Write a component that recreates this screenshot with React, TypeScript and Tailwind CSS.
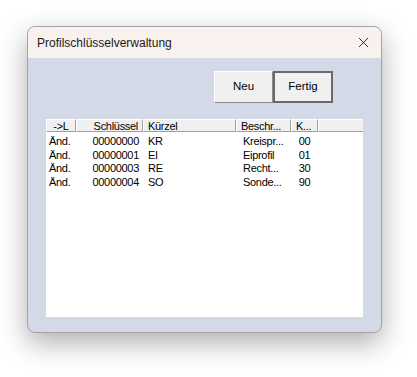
import { X } from 'lucide-react'

const rows = [
  { a: 'Änd.', key: '00000000', short: 'KR', desc: 'Kreispr...', k: '00' },
  { a: 'Änd.', key: '00000001', short: 'EI', desc: 'Eiprofil', k: '01' },
  { a: 'Änd.', key: '00000003', short: 'RE', desc: 'Recht...', k: '30' },
  { a: 'Änd.', key: '00000004', short: 'SO', desc: 'Sonde...', k: '90' },
]

const cols = 'grid grid-cols-[30px_67px_93px_55px_27px_1fr]'
const headCell =
  'h-[13px] leading-[12px] px-[4px] bg-[#f0f0f0] border-t border-l border-t-white border-l-white border-r border-b border-r-[#a0a0a0] border-b-[#a0a0a0] truncate'

export default function App() {
  return (
    <div className="w-[417px] h-[377px] bg-white pt-[26px] pl-[27px]" style={{ fontFamily: '"Liberation Sans", Arial, sans-serif' }}>
      <div className="w-[355px] h-[307px] rounded-[8px] border border-[#a3a3a8] bg-[#d4d9e8] shadow-[0_10px_28px_rgba(0,0,0,0.32)] overflow-hidden flex flex-col">
        {/* title bar */}
        <div className="h-[31px] shrink-0 bg-[#f9f1ed] flex items-center justify-between pl-[9px] pr-[9px]">
          <span className="text-[12px] text-[#1a1a1a]">Profilschlüsselverwaltung</span>
          <X size={17} strokeWidth={1.1} className="text-black" />
        </div>

        <div className="flex-1 flex flex-col px-[18px] pb-[15px] pt-[13px]">
          <div className="flex justify-end pr-[30px]">
            <button className="w-[59px] h-[32px] bg-[#f0f0f0] text-[11.5px] border border-t-white border-l-white border-r-[#8a8a8a] border-b-[#8a8a8a]">
              Neu
            </button>
            <button className="w-[60px] h-[32px] bg-[#f0f0f0] text-[11.5px] border-2 border-[#6a6a6a]">
              Fertig
            </button>
          </div>

          <div className="mt-[16px] flex-1 bg-white text-[11px] text-black tracking-[-0.3px]">
            <div className={cols}>
              <div className={headCell + ' text-center'}>-&gt;L</div>
              <div className={headCell + ' text-right'}>Schlüssel</div>
              <div className={headCell}>Kürzel</div>
              <div className={headCell}>Beschr...</div>
              <div className={headCell}>K...</div>
              <div className="h-[13px] bg-[#f0f0f0] border-t border-l border-t-white border-l-white border-b border-b-[#a0a0a0]" />
            </div>
            <div className="pt-[3px]">
              {rows.map((r) => (
                <div key={r.key} className={cols + ' h-[13.5px] leading-[13px]'}>
                  <div className="pl-[3px]">{r.a}</div>
                  <div className="text-right pr-[4px]">{r.key}</div>
                  <div className="pl-[5px]">{r.short}</div>
                  <div className="pl-[7px]">{r.desc}</div>
                  <div className="text-center">{r.k}</div>
                  <div />
                </div>
              ))}
            </div>
          </div>
        </div>
      </div>
    </div>
  )
}
